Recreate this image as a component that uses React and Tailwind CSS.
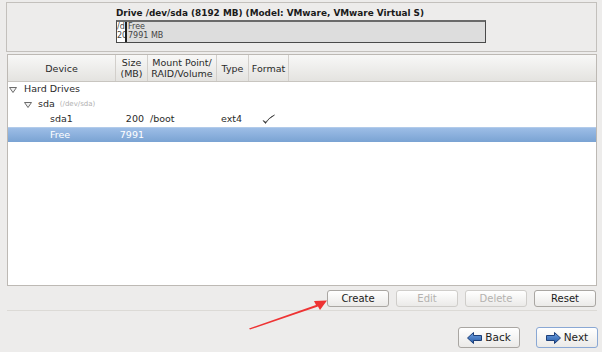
import React from 'react';

const font = { fontFamily: '"DejaVu Sans", "Liberation Sans", sans-serif' };

function Expander() {
  return (
    <svg width="8" height="6" viewBox="0 0 8 6" className="shrink-0">
      <polygon points="0.5,0.5 7.5,0.5 4,5.5" fill="#f2f2f2" stroke="#6b6b6b" strokeWidth="1" />
    </svg>
  );
}

function ArrowIcon({ dir }) {
  const pts = dir === 'left'
    ? '0.5,6 6.5,0.5 6.5,3.5 14.5,3.5 14.5,8.5 6.5,8.5 6.5,11.5'
    : '14.5,6 8.5,0.5 8.5,3.5 0.5,3.5 0.5,8.5 8.5,8.5 8.5,11.5';
  return (
    <svg width="15" height="12" viewBox="0 0 15 12">
      <defs>
        <linearGradient id={'g' + dir} x1="0" y1="0" x2="0" y2="1">
          <stop offset="0" stopColor="#6fa0e0" />
          <stop offset="1" stopColor="#245aa8" />
        </linearGradient>
      </defs>
      <polygon points={pts} fill={'url(#g' + dir + ')'} stroke="#1d3f78" strokeWidth="1" strokeLinejoin="round" />
    </svg>
  );
}

function Btn({ children, disabled, focused, className = '' }) {
  return (
    <div
      className={
        'flex items-center justify-center rounded-[3px] border bg-gradient-to-b from-white to-[#ebeae8] text-[10px] ' +
        (disabled ? 'border-[#cfcdca] text-[#b4b2af] ' : focused ? 'border-[#8aa8d4] text-[#1c1c1c] ' : 'border-[#a9a6a2] text-[#1c1c1c] ') +
        className
      }
    >
      {children}
    </div>
  );
}

export default function App() {
  return (
    <div className="relative w-[608px] h-[356px] bg-white overflow-hidden" style={font}>
      <div className="w-[602px] h-[352px] bg-[#edeceb] flex flex-col">
        {/* drive panel */}
        <div className="mt-[2px] ml-[6px] w-[591px] h-[50px] border border-[#c3c0bc] pl-[109px] pt-[5px]">
          <div className="text-[8.9px] font-bold text-[#1a1a1a] leading-[11px]">
            Drive /dev/sda (8192 MB) (Model: VMware, VMware Virtual S)
          </div>
          <div className="mt-[1px] w-[370px] h-[23px] flex border border-[#4a4a4a] border-t-2 border-t-[#6a6a6a] bg-[#dddddd]">
            <div className="w-[10px] shrink-0 bg-white border-r-2 border-[#222] overflow-hidden text-[8px] leading-[8.5px] text-[#444] pt-[1px] whitespace-nowrap">
              <div>/d</div>
              <div>20</div>
            </div>
            <div className="pl-[1px] text-[8px] leading-[8.5px] text-[#444] pt-[1px]">
              <div>Free</div>
              <div>7991 MB</div>
            </div>
          </div>
        </div>

        {/* partition table */}
        <div className="mt-[2px] ml-[7px] w-[590px] h-[232px] border border-[#bdb9b4] bg-white flex flex-col">
          <div className="h-[27px] flex bg-gradient-to-b from-[#f8f8f7] to-[#e4e3e0] border-b border-[#c8c5c0] text-[9.5px] leading-[11px] text-[#2a2a2a]">
            <div className="w-[108px] flex items-center justify-center border-r border-[#d2cfcb]">Device</div>
            <div className="w-[32px] flex flex-col items-center justify-center border-r border-[#d2cfcb]">
              <span>Size</span>
              <span>(MB)</span>
            </div>
            <div className="w-[69px] flex flex-col items-center justify-center border-r border-[#d2cfcb]">
              <span>Mount Point/</span>
              <span>RAID/Volume</span>
            </div>
            <div className="w-[32px] flex items-center justify-center border-r border-[#d2cfcb]">Type</div>
            <div className="w-[40px] flex items-center justify-center border-r border-[#d2cfcb]">Format</div>
          </div>
          <div className="text-[9.5px] text-[#2a2a2a]">
            <div className="h-[15px] flex items-center">
              <div className="ml-[1px]"><Expander /></div>
              <span className="ml-[7px]">Hard Drives</span>
            </div>
            <div className="h-[15px] flex items-center">
              <div className="ml-[16px]"><Expander /></div>
              <span className="ml-[6px]">sda</span>
              <span className="ml-[5px] text-[7px] text-[#b0b0b0]">(/dev/sda)</span>
            </div>
            <div className="h-[15px] flex items-center">
              <span className="w-[108px] pl-[42px]">sda1</span>
              <span className="w-[28px] text-right">200</span>
              <span className="w-[73px] pl-[6px]">/boot</span>
              <span className="w-[32px] pl-[4px]">ext4</span>
              <span className="w-[40px] pl-[13px]">
                <svg width="13" height="11" viewBox="0 0 13 11">
                  <path d="M1 6.5 L3.5 9.5 Q7 3 12.5 1 Q7 4.5 3.7 8 Z" fill="#333" stroke="#333" strokeWidth="0.6" />
                </svg>
              </span>
            </div>
            <div className="h-[15px] flex items-center bg-gradient-to-b from-[#9dbde6] to-[#7aa3d3] border-t border-[#b2cbea] text-white">
              <span className="w-[108px] pl-[42px]">Free</span>
              <span className="w-[28px] text-right">7991</span>
            </div>
          </div>
        </div>

        {/* action buttons */}
        <div className="mt-[4px] flex justify-end gap-[7px] pr-[6px] w-[602px]">
          <Btn className="w-[62px] h-[17px]">Create</Btn>
          <Btn className="w-[62px] h-[17px]" disabled>Edit</Btn>
          <Btn className="w-[62px] h-[17px]" disabled>Delete</Btn>
          <Btn className="w-[62px] h-[17px]">Reset</Btn>
        </div>

        <div className="mt-[3px] ml-[7px] w-[590px] h-[1px] bg-[#dcdad6]" />

        <div className="mt-[16px] flex justify-end gap-[16px] pr-[4px]">
          <Btn className="w-[62px] h-[21px] gap-[3px]">
            <ArrowIcon dir="left" />
            <span className="text-[10.5px]">Back</span>
          </Btn>
          <Btn className="w-[62px] h-[21px] gap-[3px]" focused>
            <ArrowIcon dir="right" />
            <span className="text-[10.5px]">Next</span>
          </Btn>
        </div>
      </div>

      {/* red annotation arrow */}
      <svg className="absolute left-0 top-0 pointer-events-none" width="608" height="356">
        <polygon points="249,328.5 316,305 314,301 327,300.5 320,310 318,306.5 250,329.5" fill="#ee3333" />
      </svg>
    </div>
  );
}
